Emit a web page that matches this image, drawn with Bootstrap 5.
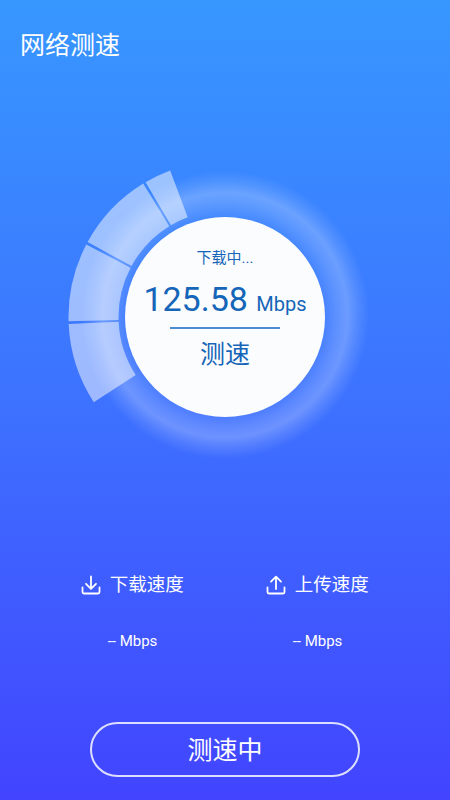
<!DOCTYPE html>
<html lang="zh">
<head>
<meta charset="utf-8">
<link href="https://cdn.jsdelivr.net/npm/bootstrap@5.3.0/dist/css/bootstrap.min.css" rel="stylesheet">
<style>
html,body{height:100%;}
body{margin:0;background:linear-gradient(180deg,#3797ff 0%,#3d72ff 50%,#4244ff 100%);color:#fff;font-family:Roboto,"Noto Sans CJK SC",sans-serif;}
.screen{width:450px;height:800px;overflow:hidden;}
.app-title{font-size:25px;line-height:32px;padding:30px 0 0 20px;margin:0;font-weight:400;}
.gauge{width:450px;height:400px;margin-top:55px;}
.gauge-art{position:absolute;left:0;top:0;}
.dial{width:200px;height:200px;background:#fbfcfd;color:#1565b8;}
.dial-state{font-size:15px;line-height:20px;margin-top:31px;}
.dial-value{font-size:34px;line-height:44px;margin-top:9px;white-space:nowrap;}
.dial-unit{font-size:20px;}
.dial-rule{width:110px;height:2px;background:#4d8cd0;margin-top:1px;}
.dial-action{font-size:25px;line-height:32px;margin-top:10px;}
.stats{margin-top:56px;}
.stat-col{width:185px;}
.stat-head{font-size:18.5px;line-height:24px;gap:8.5px;}
.stat-val{font-size:15px;line-height:20px;margin-top:34px;}
.stat-icon{width:20px;height:20px;}
.run-btn{width:270px;height:55px;border:2px solid rgba(255,255,255,.82);border-radius:28px;color:#fff;font-size:25px;line-height:1;background:transparent;margin-top:71px;padding:2px 0 0;}
.run-btn:hover{color:#fff;}
</style>
</head>
<body>
<div class="screen d-flex flex-column">
  <h1 class="app-title">网络测速</h1>
  <div class="gauge position-relative d-flex justify-content-center align-items-center">
    <svg class="gauge-art" width="450" height="400" viewBox="0 0 450 400">
      <defs>
        <radialGradient id="glow" gradientUnits="userSpaceOnUse" cx="225" cy="198" r="144">
          <stop offset="0.68" stop-color="#fff" stop-opacity="0.05"/>
          <stop offset="0.78" stop-color="#fff" stop-opacity="0.18"/>
          <stop offset="0.85" stop-color="#fff" stop-opacity="0.25"/>
          <stop offset="0.92" stop-color="#fff" stop-opacity="0.12"/>
          <stop offset="1" stop-color="#fff" stop-opacity="0"/>
        </radialGradient>
      </defs>
      <circle cx="225" cy="198" r="144" fill="url(#glow)"/>
      <g id="segs" fill="#fff" fill-opacity="0.5"></g>
    </svg>
    <div class="dial rounded-circle position-relative d-flex flex-column align-items-center">
      <div class="dial-state">下载中...</div>
      <div class="dial-value">125.58 <span class="dial-unit">Mbps</span></div>
      <div class="dial-rule"></div>
      <div class="dial-action">测速</div>
    </div>
  </div>
  <div class="stats d-flex justify-content-center">
    <div class="stat-col d-flex flex-column align-items-center">
      <div class="stat-head d-flex align-items-center">
        <svg class="stat-icon" viewBox="0 0 20 20" fill="none" stroke="#fff" stroke-width="1.8" stroke-linecap="round" stroke-linejoin="round"><path d="M10 1.500v12M5 8.800l5 5 5-5M1.500 12.500v4.500a1.500 1.500 0 0 0 1.500 1.500h14a1.500 1.500 0 0 0 1.500-1.500v-4.500"/></svg>
        <span>下载速度</span>
      </div>
      <div class="stat-val">-- Mbps</div>
    </div>
    <div class="stat-col d-flex flex-column align-items-center">
      <div class="stat-head d-flex align-items-center">
        <svg class="stat-icon" viewBox="0 0 20 20" fill="none" stroke="#fff" stroke-width="1.8" stroke-linecap="round" stroke-linejoin="round"><path d="M10 14V2M5 6.700l5-5 5 5M1.500 12.500v4.500a1.500 1.500 0 0 0 1.500 1.500h14a1.500 1.500 0 0 0 1.500-1.500v-4.500"/></svg>
        <span>上传速度</span>
      </div>
      <div class="stat-val">-- Mbps</div>
    </div>
  </div>
  <div class="d-flex justify-content-center">
    <button type="button" class="btn run-btn">测速中</button>
  </div>
</div>
<script>
(function(){
  var cx=225,cy=200,ri=106.5,ro=156.5;
  var spans=[[237,267.4],[268.4,297.6],[298.6,328.5],[329.5,339.5]];
  var ns='http://www.w3.org/2000/svg',g=document.getElementById('segs');
  function pt(r,a){var t=a*Math.PI/180;return (cx+r*Math.sin(t)).toFixed(2)+' '+(cy-r*Math.cos(t)).toFixed(2);}
  spans.forEach(function(s){
    var p=document.createElementNS(ns,'path');
    p.setAttribute('d','M'+pt(ro,s[0])+'A'+ro+' '+ro+' 0 0 1 '+pt(ro,s[1])+'L'+pt(ri,s[1])+'A'+ri+' '+ri+' 0 0 0 '+pt(ri,s[0])+'Z');
    g.appendChild(p);
  });
})();
</script>
<script src="https://cdn.jsdelivr.net/npm/bootstrap@5.3.0/dist/js/bootstrap.bundle.min.js"></script>
</body>
</html>
